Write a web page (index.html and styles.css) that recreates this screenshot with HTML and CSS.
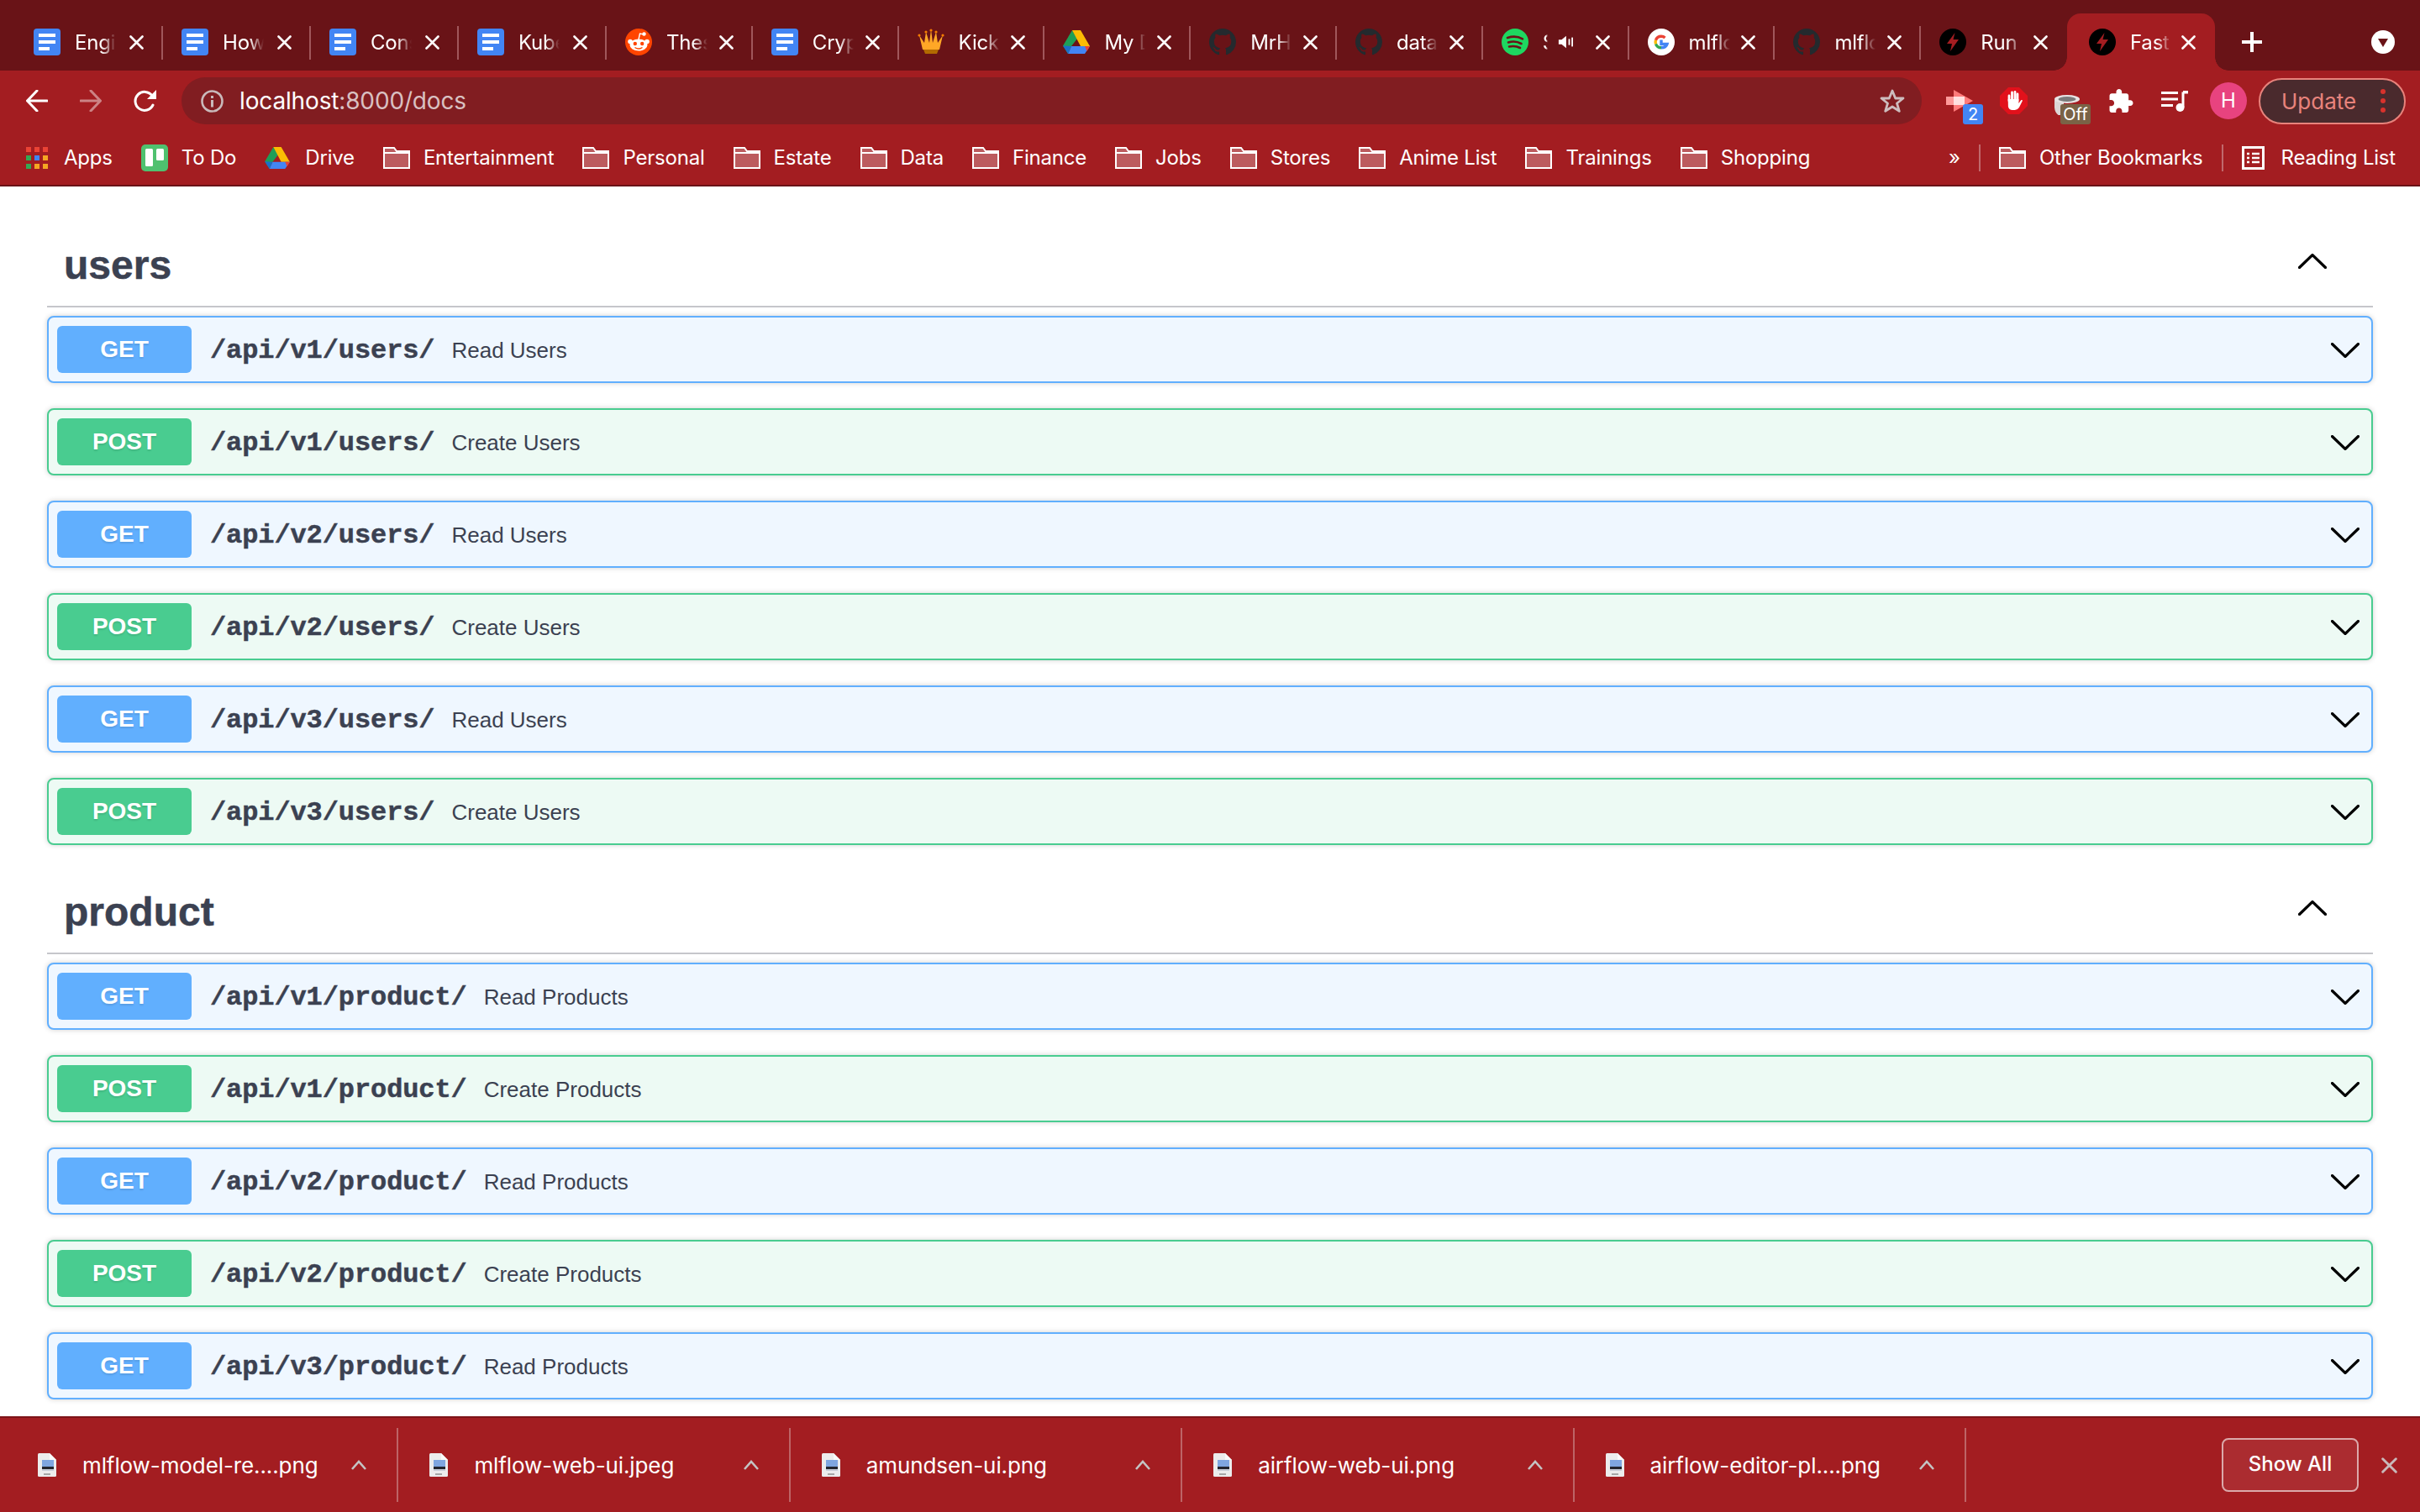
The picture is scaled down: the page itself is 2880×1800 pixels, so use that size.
FILE: index.html
```html
<!DOCTYPE html>
<html lang="en">
<head>
<meta charset="utf-8">
<title>FastAPI - Swagger UI</title>
<link rel="stylesheet" href="styles.css">
</head>
<body>
<svg class="defs" aria-hidden="true">
  <symbol id="docs" viewBox="0 0 32 32"><rect width="32" height="32" rx="4" fill="#4285f4"/><rect x="6" y="6" width="20" height="4" fill="#fff"/><rect x="6" y="14" width="20" height="4" fill="#fff"/><rect x="6" y="22" width="13" height="4" fill="#fff"/></symbol>
  <symbol id="reddit" viewBox="0 0 32 32"><circle cx="16" cy="16" r="16" fill="#ff4500"/><ellipse cx="16" cy="19.500" rx="10.500" ry="7" fill="#fff"/><circle cx="6" cy="15.500" r="2.800" fill="#fff"/><circle cx="26" cy="15.500" r="2.800" fill="#fff"/><circle cx="22.500" cy="6.500" r="2.200" fill="#fff"/><path d="M16 13l1.500-7 5 1" fill="none" stroke="#fff" stroke-width="1.400"/><circle cx="11.800" cy="18" r="2.200" fill="#ff4500"/><circle cx="20.200" cy="18" r="2.200" fill="#ff4500"/><path d="M11.500 22.500c3 2 6 2 9 0" fill="none" stroke="#ff4500" stroke-width="1.500"/></symbol>
  <symbol id="crown" viewBox="0 0 32 32"><path d="M2 8l6 9 2-13 4 13 2-16 2 16 4-13 2 13 6-9-4 17H6z" fill="#ffa726"/><circle cx="2" cy="8" r="1.600" fill="#f57c00"/><circle cx="10" cy="4" r="1.600" fill="#f57c00"/><circle cx="16" cy="2" r="1.600" fill="#f57c00"/><circle cx="22" cy="4" r="1.600" fill="#f57c00"/><circle cx="30" cy="8" r="1.600" fill="#f57c00"/><path d="M7 25h18l-2 5H9z" fill="#b26a00"/></symbol>
  <symbol id="drive" viewBox="0 0 32 28"><polygon points="11,0 17,10 10,19 6,28 0,18.500" fill="#1e9e57"/><polygon points="11,0 21,0 32,19 21,19" fill="#fbbc04"/><polygon points="10,19 32,19 26,28 6,28" fill="#4285f4"/><polygon points="26,19 32,19 28.500,25" fill="#ea4335"/><polygon points="6,28 0,18.500 10,19" fill="#1a6fc9"/></symbol>
  <symbol id="github" viewBox="0 0 16 16"><path fill="#242a2e" d="M8 0C3.580 0 0 3.580 0 8c0 3.540 2.290 6.530 5.470 7.590.4.070.55-.17.55-.38 0-.19-.01-.82-.01-1.490-2.010.37-2.530-.49-2.690-.94-.09-.23-.48-.94-.82-1.130-.28-.15-.68-.52-.01-.53.63-.01 1.080.58 1.230.82.72 1.210 1.870.87 2.330.66.07-.52.28-.87.51-1.070-1.780-.2-3.640-.89-3.640-3.950 0-.87.31-1.590.82-2.150-.08-.2-.36-1.020.08-2.120 0 0 .67-.21 2.200.82.64-.18 1.320-.27 2-.27.68 0 1.360.09 2 .27 1.530-1.040 2.200-.82 2.200-.82.44 1.100.16 1.920.08 2.120.51.56.82 1.270.82 2.150 0 3.070-1.870 3.750-3.650 3.950.29.25.54.73.54 1.480 0 1.070-.01 1.930-.01 2.200 0 .21.15.46.55.38A8.013 8.013 0 0016 8c0-4.420-3.580-8-8-8z"/></symbol>
  <symbol id="spotify" viewBox="0 0 32 32"><circle cx="16" cy="16" r="16" fill="#1ed760"/><path d="M7 11c6-2 13-1.500 18 1.300M8 16.500c5-1.500 11-1 15.500 1.500M9 21.500c4.500-1 9-.7 13 1.500" fill="none" stroke="#691317" stroke-width="2.600" stroke-linecap="round"/></symbol>
  <symbol id="google" viewBox="0 0 32 32"><circle cx="16" cy="16" r="16" fill="#fff"/><path d="M16 13.500v5h7c-.8 2.600-3.500 4.300-7 4.300" fill="none" stroke="#4285f4" stroke-width="3.400"/><path d="M16 22.800c-3.200 0-5.600-2-6.500-4.600" fill="none" stroke="#34a853" stroke-width="3.400"/><path d="M9.500 18.200c-.5-1.500-.5-2.900 0-4.400" fill="none" stroke="#fbbc04" stroke-width="3.400"/><path d="M9.500 13.800c.9-2.700 3.300-4.600 6.500-4.600 1.800 0 3.300.6 4.500 1.700" fill="none" stroke="#ea4335" stroke-width="3.400"/></symbol>
  <symbol id="bolt" viewBox="0 0 32 32"><circle cx="16" cy="16" r="16" fill="#000"/><path d="M18.500 5L9 18h6l-2 9 10-14h-6.500z" fill="#a31d21"/></symbol>
  <symbol id="close" viewBox="0 0 17 17"><path d="M1.500 1.500l14 14M15.500 1.500l-14 14" fill="none" stroke="currentColor" stroke-width="2.600" stroke-linecap="round"/></symbol>
  <symbol id="folder" viewBox="0 0 32 26"><path d="M1 25V1h12l3 4h15v20z" fill="#fff" fill-opacity=".28"/><path d="M1 25V1h12l3 4h15v20zM1 7h30" fill="none" stroke="#fff" stroke-width="2"/></symbol>
  <symbol id="down" viewBox="0 0 34 18"><path d="M1.500 1.500L17 16.500 32.500 1.500" fill="none" stroke="#000" stroke-width="3.200" stroke-linecap="round"/></symbol>
  <symbol id="up" viewBox="0 0 34 18"><path d="M1.500 16.500L17 1.500l15.500 15" fill="none" stroke="#000" stroke-width="3.200" stroke-linecap="round"/></symbol>
  <symbol id="file" viewBox="0 0 22 28"><path d="M0 1.500Q0 0 1.500 0H14l8 8v18.500q0 1.500-1.500 1.500h-19Q0 28 0 26.500z" fill="#ececec"/><path d="M14 0l8 8h-8z" fill="#fafafa"/><rect x="5" y="8" width="14" height="8" fill="#7fa6e0"/><rect x="5" y="16" width="14" height="3" fill="#23262e"/><rect x="5" y="19" width="14" height="2" fill="#c7ccd6"/><rect x="7" y="24" width="8" height="2" fill="#a6a6a6"/></symbol>
  <symbol id="caret" viewBox="0 0 20 12"><path d="M2 11l8-9 8 9" fill="none" stroke="#c4c4c4" stroke-width="2.600"/></symbol>
</svg>

<header class="chrome">
  <div class="tabstrip">
    <div class="tab tab-wide sep"><svg class="fav"><use href="#docs"/></svg><span class="tab-title">Engi</span><svg class="tab-x"><use href="#close"/></svg></div>
    <div class="tab tab-wide sep"><svg class="fav"><use href="#docs"/></svg><span class="tab-title">How</span><svg class="tab-x"><use href="#close"/></svg></div>
    <div class="tab tab-wide sep"><svg class="fav"><use href="#docs"/></svg><span class="tab-title">Cons</span><svg class="tab-x"><use href="#close"/></svg></div>
    <div class="tab tab-wide sep"><svg class="fav"><use href="#docs"/></svg><span class="tab-title">Kube</span><svg class="tab-x"><use href="#close"/></svg></div>
    <div class="tab sep"><svg class="fav"><use href="#reddit"/></svg><span class="tab-title">Thes</span><svg class="tab-x"><use href="#close"/></svg></div>
    <div class="tab sep"><svg class="fav"><use href="#docs"/></svg><span class="tab-title">Cryp</span><svg class="tab-x"><use href="#close"/></svg></div>
    <div class="tab sep"><svg class="fav"><use href="#crown"/></svg><span class="tab-title">Kick</span><svg class="tab-x"><use href="#close"/></svg></div>
    <div class="tab sep"><svg class="fav"><use href="#drive"/></svg><span class="tab-title">My D</span><svg class="tab-x"><use href="#close"/></svg></div>
    <div class="tab sep"><svg class="fav"><use href="#github"/></svg><span class="tab-title">MrHa</span><svg class="tab-x"><use href="#close"/></svg></div>
    <div class="tab sep"><svg class="fav"><use href="#github"/></svg><span class="tab-title">data</span><svg class="tab-x"><use href="#close"/></svg></div>
    <div class="tab sep"><svg class="fav"><use href="#spotify"/></svg><span class="tab-title tab-title-short">S</span><svg class="speaker" viewBox="0 0 20 20"><path d="M1 7h4l6-5v16l-6-5H1z" fill="#fff"/><rect x="14" y="6" width="2" height="8" fill="#fff"/><rect x="18" y="4" width="2" height="12" fill="#fff"/></svg><svg class="tab-x"><use href="#close"/></svg></div>
    <div class="tab sep"><svg class="fav"><use href="#google"/></svg><span class="tab-title">mlflo</span><svg class="tab-x"><use href="#close"/></svg></div>
    <div class="tab sep"><svg class="fav"><use href="#github"/></svg><span class="tab-title">mlflo</span><svg class="tab-x"><use href="#close"/></svg></div>
    <div class="tab"><svg class="fav"><use href="#bolt"/></svg><span class="tab-title">Run</span><svg class="tab-x"><use href="#close"/></svg></div>
    <div class="tab tab-active"><svg class="fav"><use href="#bolt"/></svg><span class="tab-title">Fast</span><svg class="tab-x"><use href="#close"/></svg></div>
    <svg class="newtab" viewBox="0 0 24 24"><path d="M12 0v24M0 12h24" stroke="#fff" stroke-width="4"/></svg>
    <svg class="tabmenu" viewBox="0 0 28 28"><circle cx="14" cy="14" r="14" fill="#fff"/><path d="M8 10h12l-6 10z" fill="#691317"/></svg>
  </div>

  <div class="toolbar">
    <svg class="nav" viewBox="0 0 26 26"><path d="M25 13H2M13 1L1.500 13 13 25" fill="none" stroke="#fff" stroke-width="3" stroke-linecap="round" stroke-linejoin="round"/></svg>
    <svg class="nav nav-dim" viewBox="0 0 26 26"><path d="M1 13h23M13 1l11.500 12L13 25" fill="none" stroke="#fff" stroke-width="3" stroke-linecap="round" stroke-linejoin="round"/></svg>
    <svg class="nav nav-reload" viewBox="0 0 28 26"><path d="M23 18a11 11 0 1 1-1-11" fill="none" stroke="#fff" stroke-width="3" stroke-linecap="round"/><path d="M27 0v11H16z" fill="#fff"/></svg>
    <div class="omnibox">
      <svg class="info" viewBox="0 0 27 27"><circle cx="13.500" cy="13.500" r="12" fill="none" stroke="#c9b9ba" stroke-width="2.600"/><rect x="12" y="12" width="3" height="8.500" fill="#c9b9ba"/><rect x="12" y="7" width="3" height="3" fill="#c9b9ba"/></svg>
      <span class="url"><span class="url-host">localhost</span><span class="url-rest">:8000/docs</span></span>
      <svg class="star" viewBox="0 0 30 28"><path d="M15 2l3.700 9h9.300l-7.500 6 2.800 9.300L15 21l-8.300 5.300L9.500 17 2 11h9.300z" fill="none" stroke="#cdbdbe" stroke-width="2.800" stroke-linejoin="round"/></svg>
    </div>
    <div class="ext ext-video">
      <svg class="ext-ico" viewBox="0 0 33 26"><path d="M9 0l23 13L9 26z" fill="#ff7b7b"/><rect y="8" width="22" height="10" fill="#ff9a9a"/><rect x="9" y="8" width="13" height="10" fill="#ffe0e0"/></svg>
      <span class="badge badge-blue">2</span>
    </div>
    <div class="ext ext-block">
      <svg class="ext-ico" viewBox="0 0 33 32"><polygon points="10,0 23,0 33,10 33,22 23,32 10,32 0,22 0,10" fill="#e2111b"/><path d="M11 16V10M14.500 15V6M18 15V5.500M21 16V8" stroke="#fff" stroke-width="2.800" stroke-linecap="round" fill="none"/><path d="M9.700 14h12.700v5l3-4q1.500-.5 1.500 1l-4 8q-2 3-5 3h-3q-4 0-5-4z" fill="#fff"/></svg>
    </div>
    <div class="ext ext-pot">
      <svg class="ext-ico" viewBox="0 0 32 24"><path d="M1 6v9q.5 6 4.500 9H12V8z" fill="#dcd6d6"/><ellipse cx="16" cy="5" rx="15" ry="5" fill="#e8e4e4"/><ellipse cx="16" cy="5" rx="10.500" ry="3" fill="#7b7b7b"/></svg>
      <span class="badge badge-off">Off</span>
    </div>
    <svg class="ext-puzzle" viewBox="2 1 21 21"><path fill="#fff" d="M20.500 11H19V7c0-1.100-.9-2-2-2h-4V3.500C13 2.120 11.880 1 10.500 1S8 2.120 8 3.500V5H4c-1.100 0-1.990.9-1.990 2v3.800H3.500c1.490 0 2.700 1.210 2.700 2.700s-1.210 2.700-2.700 2.700H2V20c0 1.100.9 2 2 2h3.800v-1.500c0-1.490 1.210-2.700 2.700-2.700 1.490 0 2.700 1.210 2.700 2.700V22H17c1.100 0 2-.9 2-2v-4h1.500c1.380 0 2.500-1.120 2.500-2.500S21.880 11 20.500 11z"/></svg>
    <svg class="ext-music" viewBox="0 0 32 25"><path d="M0 2.500h20M0 10h20M0 17.500h14" stroke="#fff" stroke-width="3"/><path d="M26 1.500V20" stroke="#fff" stroke-width="3"/><path d="M26 0h6v3.500h-6z" fill="#fff"/><circle cx="22.500" cy="20" r="5" fill="#fff"/></svg>
    <div class="avatar">H</div>
    <div class="update"><span class="update-label">Update</span><svg class="update-dots" viewBox="0 0 6 28"><circle cx="3" cy="3" r="3"/><circle cx="3" cy="14" r="3"/><circle cx="3" cy="25" r="3"/></svg></div>
  </div>

  <nav class="bookmarks">
    <div class="bm">
      <svg class="bm-apps" viewBox="0 0 26 26"><g fill="#ea4335"><rect width="6" height="6"/><rect x="10" width="6" height="6"/><rect x="20" width="6" height="6"/></g><rect y="10" width="6" height="6" fill="#34a853"/><rect x="10" y="10" width="6" height="6" fill="#4285f4"/><rect x="20" y="10" width="6" height="6" fill="#f5a623"/><rect y="20" width="6" height="6" fill="#34a853"/><rect x="10" y="20" width="6" height="6" fill="#f5a623"/><rect x="20" y="20" width="6" height="6" fill="#f5a623"/></svg>
      <span class="bm-label">Apps</span>
    </div>
    <div class="bm">
      <svg class="bm-trello" viewBox="0 0 32 32"><rect width="32" height="32" rx="5" fill="#4fc16f"/><rect x="5" y="5" width="9" height="21" rx="1.500" fill="#fff"/><rect x="18" y="5" width="9" height="14" rx="1.500" fill="#fff"/></svg>
      <span class="bm-label">To Do</span>
    </div>
    <div class="bm">
      <svg class="bm-drive"><use href="#drive"/></svg>
      <span class="bm-label bm-label-drive">Drive</span>
    </div>
    <div class="bm"><svg class="bm-folder"><use href="#folder"/></svg><span class="bm-label">Entertainment</span></div>
    <div class="bm"><svg class="bm-folder"><use href="#folder"/></svg><span class="bm-label">Personal</span></div>
    <div class="bm"><svg class="bm-folder"><use href="#folder"/></svg><span class="bm-label">Estate</span></div>
    <div class="bm"><svg class="bm-folder"><use href="#folder"/></svg><span class="bm-label">Data</span></div>
    <div class="bm"><svg class="bm-folder"><use href="#folder"/></svg><span class="bm-label">Finance</span></div>
    <div class="bm"><svg class="bm-folder"><use href="#folder"/></svg><span class="bm-label">Jobs</span></div>
    <div class="bm"><svg class="bm-folder"><use href="#folder"/></svg><span class="bm-label">Stores</span></div>
    <div class="bm"><svg class="bm-folder"><use href="#folder"/></svg><span class="bm-label">Anime List</span></div>
    <div class="bm"><svg class="bm-folder"><use href="#folder"/></svg><span class="bm-label">Trainings</span></div>
    <div class="bm"><svg class="bm-folder"><use href="#folder"/></svg><span class="bm-label">Shopping</span></div>
    <div class="bm-end">
      <span class="bm-more">»</span>
      <span class="bm-sep"></span>
      <div class="bm"><svg class="bm-folder"><use href="#folder"/></svg><span class="bm-label">Other Bookmarks</span></div>
      <span class="bm-sep"></span>
      <div class="bm">
        <svg class="bm-list" viewBox="0 0 27 28"><rect x="1.500" y="1.500" width="24" height="25" fill="none" stroke="#fff" stroke-width="3"/><path d="M6 9h3M12 9h9M6 14h3M12 14h9M6 19h3M12 19h9" stroke="#fff" stroke-width="2.400"/></svg>
        <span class="bm-label">Reading List</span>
      </div>
    </div>
  </nav>
</header>

<main class="docs">
  <section class="opblock-tag">
    <div class="tag-head"><h3 class="tag-name">users</h3><svg class="tag-chev"><use href="#up"/></svg></div>
    <div class="op op-get"><span class="method">GET</span><span class="path">/api/v1/users/</span><span class="desc">Read Users</span><svg class="op-chev"><use href="#down"/></svg></div>
    <div class="op op-post"><span class="method">POST</span><span class="path">/api/v1/users/</span><span class="desc">Create Users</span><svg class="op-chev"><use href="#down"/></svg></div>
    <div class="op op-get"><span class="method">GET</span><span class="path">/api/v2/users/</span><span class="desc">Read Users</span><svg class="op-chev"><use href="#down"/></svg></div>
    <div class="op op-post"><span class="method">POST</span><span class="path">/api/v2/users/</span><span class="desc">Create Users</span><svg class="op-chev"><use href="#down"/></svg></div>
    <div class="op op-get"><span class="method">GET</span><span class="path">/api/v3/users/</span><span class="desc">Read Users</span><svg class="op-chev"><use href="#down"/></svg></div>
    <div class="op op-post"><span class="method">POST</span><span class="path">/api/v3/users/</span><span class="desc">Create Users</span><svg class="op-chev"><use href="#down"/></svg></div>
  </section>
  <section class="opblock-tag">
    <div class="tag-head"><h3 class="tag-name">product</h3><svg class="tag-chev"><use href="#up"/></svg></div>
    <div class="op op-get"><span class="method">GET</span><span class="path">/api/v1/product/</span><span class="desc">Read Products</span><svg class="op-chev"><use href="#down"/></svg></div>
    <div class="op op-post"><span class="method">POST</span><span class="path">/api/v1/product/</span><span class="desc">Create Products</span><svg class="op-chev"><use href="#down"/></svg></div>
    <div class="op op-get"><span class="method">GET</span><span class="path">/api/v2/product/</span><span class="desc">Read Products</span><svg class="op-chev"><use href="#down"/></svg></div>
    <div class="op op-post"><span class="method">POST</span><span class="path">/api/v2/product/</span><span class="desc">Create Products</span><svg class="op-chev"><use href="#down"/></svg></div>
    <div class="op op-get"><span class="method">GET</span><span class="path">/api/v3/product/</span><span class="desc">Read Products</span><svg class="op-chev"><use href="#down"/></svg></div>
  </section>
</main>

<footer class="shelf">
  <div class="dl"><svg class="dl-file"><use href="#file"/></svg><span class="dl-name">mlflow-model-re....png</span><svg class="dl-caret"><use href="#caret"/></svg></div>
  <div class="dl"><svg class="dl-file"><use href="#file"/></svg><span class="dl-name">mlflow-web-ui.jpeg</span><svg class="dl-caret"><use href="#caret"/></svg></div>
  <div class="dl"><svg class="dl-file"><use href="#file"/></svg><span class="dl-name">amundsen-ui.png</span><svg class="dl-caret"><use href="#caret"/></svg></div>
  <div class="dl"><svg class="dl-file"><use href="#file"/></svg><span class="dl-name">airflow-web-ui.png</span><svg class="dl-caret"><use href="#caret"/></svg></div>
  <div class="dl"><svg class="dl-file"><use href="#file"/></svg><span class="dl-name">airflow-editor-pl....png</span><svg class="dl-caret"><use href="#caret"/></svg></div>
  <div class="shelf-end">
    <div class="show-all">Show All</div>
    <svg class="shelf-x"><use href="#close"/></svg>
  </div>
</footer>
</body>
</html>
```

FILE: styles.css
```css
* { box-sizing: border-box; }
html, body { margin: 0; height: 100%; }
body {
  display: flex;
  flex-direction: column;
  height: 1800px;
  overflow: hidden;
  background: #fff;
  font-family: "Inter", "Liberation Sans", sans-serif;
}
.defs { display: none; }

/* browser chrome */
.tabstrip {
  display: flex;
  height: 84px;
  padding: 16px 0 0 18px;
  background: #691317;
}
.tab {
  position: relative;
  display: flex;
  align-items: center;
  flex: 0 0 173.8px;
  height: 68px;
  padding: 0 23px 0 22px;
  color: #fff;
}
.tab-wide { flex-basis: 176px; }
.tab.sep::after {
  content: "";
  position: absolute;
  right: 0;
  top: 15px;
  width: 2px;
  height: 40px;
  background: #a0575b;
}
.tab-active {
  flex-basis: 176px;
  padding-left: 26px;
  background: #a31d21;
  border-radius: 16px 16px 0 0;
}
.tab-active::before,
.tab-active::after {
  content: "";
  position: absolute;
  bottom: 0;
  width: 16px;
  height: 16px;
}
.tab-active::before {
  left: -16px;
  background: radial-gradient(circle at 0 0, transparent 15.5px, #a31d21 16px);
}
.tab-active::after {
  right: -16px;
  background: radial-gradient(circle at 100% 0, transparent 15.5px, #a31d21 16px);
}
.fav { width: 32px; height: 32px; flex: none; }
.tab-title {
  width: 49px;
  margin-left: 17px;
  overflow: hidden;
  white-space: nowrap;
  font-size: 24px;
  letter-spacing: -.2px;
  -webkit-mask-image: linear-gradient(to right, #000 65%, transparent);
  mask-image: linear-gradient(to right, #000 65%, transparent);
}
.tab-title-short { width: 6px; }
.speaker { width: 18px; height: 20px; margin-left: 12px; flex: none; }
.tab-x { width: 17px; height: 17px; margin-left: auto; flex: none; color: #fff; }
.newtab { width: 24px; height: 24px; margin: 22px 0 0 32px; flex: none; }
.tabmenu { width: 28px; height: 28px; margin: 20px 0 0 130px; flex: none; }

.toolbar {
  display: flex;
  align-items: center;
  height: 72px;
  padding: 8px 17px 8px 31px;
  background: #a31d21;
}
.nav { width: 26px; height: 26px; margin-right: 38px; flex: none; }
.nav-dim { opacity: .45; }
.nav-reload { width: 28px; margin-right: 29px; }
.omnibox {
  display: flex;
  align-items: center;
  flex: 0 0 2071px;
  height: 56px;
  padding: 0 20px 0 23px;
  border-radius: 28px;
  background: #811d21;
}
.info { width: 27px; height: 27px; flex: none; }
.url { margin-left: 19px; font-size: 28px; letter-spacing: -.15px; color: #d9c0c1; white-space: nowrap; }
.url-host { color: #fff; }
.star { width: 30px; height: 28px; margin-left: auto; flex: none; }
.ext { position: relative; height: 44px; flex: none; }
.ext-ico { display: block; }
.ext-video { width: 44px; margin-left: 29px; }
.ext-video .ext-ico { width: 33px; height: 26px; margin-top: 9px; }
.ext-block { width: 33px; margin-left: 20px; height: 32px; }
.ext-block .ext-ico { width: 33px; height: 32px; }
.ext-pot { width: 44px; margin-left: 31px; }
.ext-pot .ext-ico { width: 32px; height: 24px; margin-top: 15px; }
.badge {
  position: absolute;
  bottom: -6px;
  right: 0;
  height: 24px;
  border-radius: 3px;
  color: #fff;
  font-size: 20px;
  line-height: 24px;
  text-align: center;
}
.badge-blue { width: 24px; background: #4285f4; }
.badge-off { width: 36px; background: #7a6246; }
.ext-puzzle { width: 29px; height: 28px; margin-left: 22px; flex: none; }
.ext-music { width: 32px; height: 25px; margin-left: 33px; flex: none; }
.avatar {
  width: 44px;
  height: 44px;
  margin-left: 26px;
  flex: none;
  border-radius: 50%;
  background: #e8437f;
  color: #fff;
  font-size: 24px;
  line-height: 44px;
  text-align: center;
}
.update {
  display: flex;
  align-items: center;
  justify-content: space-between;
  width: 175px;
  height: 55px;
  margin-left: 14px;
  padding: 0 22px 0 25px;
  flex: none;
  border: 2px solid #e8837c;
  border-radius: 28px;
  background: #4a2a2d;
  color: #e8837c;
  font-size: 26px;
}
.update-dots { width: 6px; height: 28px; fill: #d8322c; }

.bookmarks {
  display: flex;
  align-items: center;
  gap: 34px;
  height: 66px;
  padding: 0 29px 1px 31px;
  background: #a31d21;
  border-bottom: 2px solid #691317;
}
.bm { display: flex; align-items: center; flex: none; }
.bm-label { margin-left: 16px; color: #fff; font-size: 24px; letter-spacing: -.2px; white-space: nowrap; }
.bm-apps { width: 26px; height: 26px; margin-right: 3px; }
.bm-trello { width: 32px; height: 32px; }
.bm-drive { width: 30px; height: 26px; }
.bm-label-drive { margin-left: 18px; }
.bm-folder { width: 32px; height: 26px; }
.bm-end { display: flex; align-items: center; margin-left: auto; gap: 22px; }
.bm-more { color: #fff; font-size: 24px; }
.bm-sep { width: 2px; height: 32px; background: #c0696c; }
.bm-list { width: 27px; height: 28px; margin-right: 4px; }

/* page */
.docs {
  flex: 1;
  min-height: 0;
  overflow: hidden;
  padding: 44px 56px 0;
  color: #3b4151;
  font-family: "Liberation Sans", Arial, sans-serif;
}
.tag-head {
  display: flex;
  align-items: center;
  justify-content: space-between;
  height: 100px;
  margin-bottom: 10px;
  padding: 0 55px 0 20px;
  border-bottom: 2px solid #c5c6cb;
}
.tag-name { margin: 0; font-size: 48px; font-weight: 700; -webkit-text-stroke: .5px #3b4151; }
.tag-chev { width: 34px; height: 18px; margin-bottom: 8px; }
.op {
  display: flex;
  align-items: center;
  height: 80px;
  margin-bottom: 30px;
  padding: 0 14px 0 10px;
  border: 2px solid;
  border-radius: 8px;
  box-shadow: 0 0 6px rgba(0, 0, 0, .19);
}
.op-get { border-color: #61affe; background: #eff7ff; }
.op-post { border-color: #49cc90; background: #edfaf4; }
.method {
  width: 160px;
  height: 56px;
  border-radius: 6px;
  color: #fff;
  font-size: 28px;
  font-weight: 700;
  line-height: 56px;
  text-align: center;
  text-shadow: 0 2px 2px rgba(0, 0, 0, .1);
  flex: none;
}
.op-get .method { background: #61affe; }
.op-post .method { background: #49cc90; }
.path {
  margin: 2px 0 0 22px;
  font-family: "Liberation Mono", "Courier New", monospace;
  font-size: 32px;
  font-weight: 700;
  letter-spacing: -.1px;
  -webkit-text-stroke: .5px #3b4151;
}
.desc { margin: 3px 0 0 20px; font-size: 26px; }
.op-chev { width: 34px; height: 18px; margin: 2px 0 0 auto; flex: none; }

/* download shelf */
.shelf {
  display: flex;
  align-items: center;
  flex: none;
  height: 114px;
  padding-left: 8px;
  background: #a31d21;
  border-top: 2px solid #7d1418;
}
.dl {
  position: relative;
  display: flex;
  align-items: center;
  flex: 0 0 466.4px;
  height: 88px;
  padding: 0 37px 0 37px;
}
.dl::after {
  content: "";
  position: absolute;
  right: 0;
  top: 0;
  width: 2px;
  height: 88px;
  background: #bd6466;
}
.dl-file { width: 22px; height: 28px; flex: none; }
.dl-name { margin-left: 31px; color: #fff; font-size: 26px; letter-spacing: -.1px; white-space: nowrap; }
.dl-caret { width: 20px; height: 12px; margin-left: auto; flex: none; }
.shelf-end { display: flex; align-items: center; margin-left: auto; padding-right: 27px; }
.show-all {
  width: 163px;
  height: 64px;
  border: 2px solid #dba9aa;
  border-radius: 8px;
  background: #ab2c30;
  color: #fff;
  font-size: 24px;
  font-weight: 500;
  line-height: 57px;
  text-align: center;
}
.shelf-x { width: 19px; height: 19px; margin-left: 27px; color: #c9b9ba; }
```
